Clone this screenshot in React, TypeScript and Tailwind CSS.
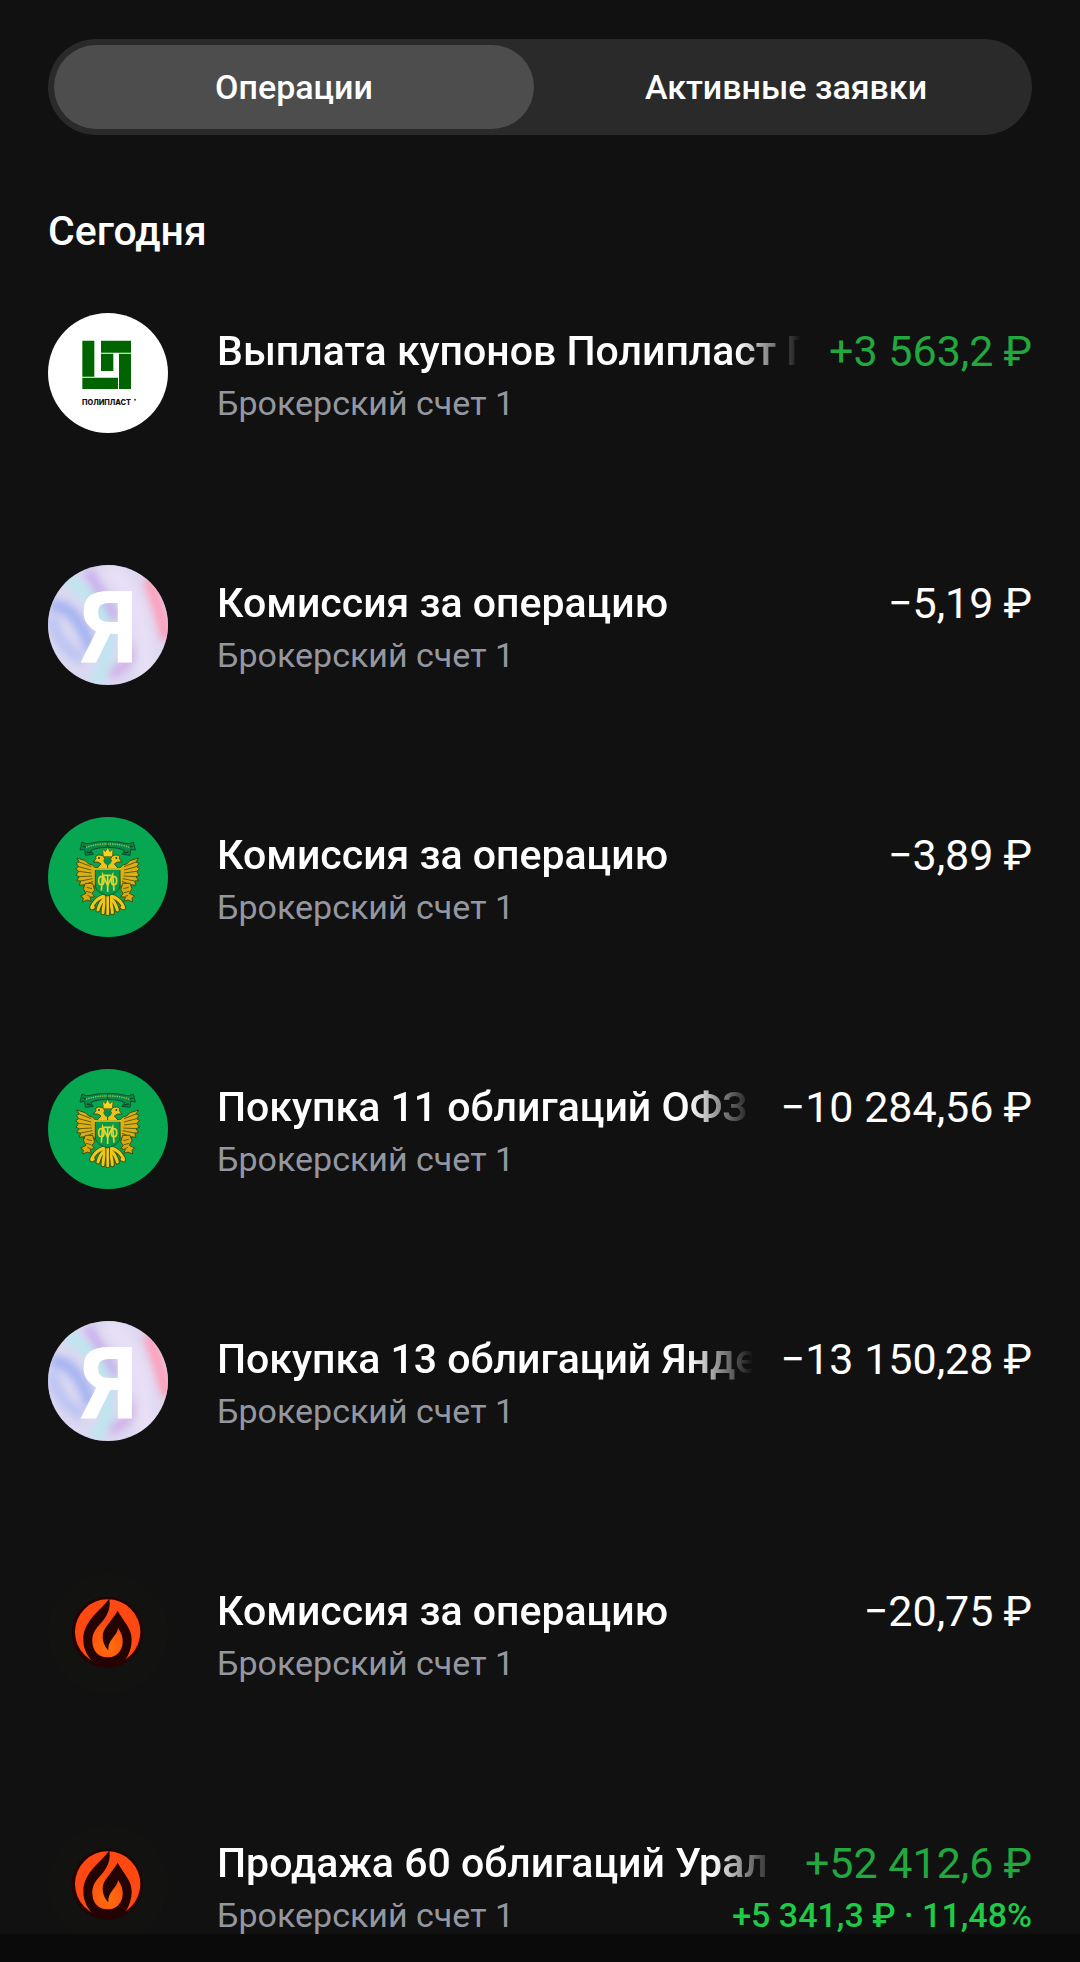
import { useState } from 'react';
import clsx from 'clsx';

type Issuer = 'polyplast' | 'yandex' | 'minfin' | 'ural';

interface Operation {
  id: number;
  issuer: Issuer;
  title: string;
  account: string;
  amount: string;
  income?: boolean;
  profit?: string;
}

const TABS = ['Операции', 'Активные заявки'];

const OPERATIONS: Operation[] = [
  {
    id: 1,
    issuer: 'polyplast',
    title: 'Выплата купонов Полипласт П',
    account: 'Брокерский счет 1',
    amount: '+3 563,2',
    income: true,
  },
  {
    id: 2,
    issuer: 'yandex',
    title: 'Комиссия за операцию',
    account: 'Брокерский счет 1',
    amount: '−5,19',
  },
  {
    id: 3,
    issuer: 'minfin',
    title: 'Комиссия за операцию',
    account: 'Брокерский счет 1',
    amount: '−3,89',
  },
  {
    id: 4,
    issuer: 'minfin',
    title: 'Покупка 11 облигаций ОФЗ',
    account: 'Брокерский счет 1',
    amount: '−10 284,56',
  },
  {
    id: 5,
    issuer: 'yandex',
    title: 'Покупка 13 облигаций Янде',
    account: 'Брокерский счет 1',
    amount: '−13 150,28',
  },
  {
    id: 6,
    issuer: 'ural',
    title: 'Комиссия за операцию',
    account: 'Брокерский счет 1',
    amount: '−20,75',
  },
  {
    id: 7,
    issuer: 'ural',
    title: 'Продажа 60 облигаций Урал',
    account: 'Брокерский счет 1',
    amount: '+52 412,6',
    income: true,
    profit: '+5 341,3 ₽ · 11,48%',
  },
];

const PolyplastLogo = () => (
  <svg viewBox="54 39 360 360" className="size-full bg-white">
    <g fill="#006400">
      <path d="M157 122h36v108h-36z" />
      <path d="M213 122h90v36h-90z" />
      <path d="M213 161h37v52h-37z" />
      <path d="M267 161h36v106h-36z" />
      <path d="M157 233h107v34H157z" />
    </g>
    <text
      x="156"
      y="314"
      fontSize="22"
      fontWeight="800"
      fill="#111"
      fontFamily="Inter, sans-serif"
    >
      ПОЛИПЛАСТ
    </text>
    <circle cx="315" cy="299" r="3" fill="#444" />
  </svg>
);

const YandexLogo = () => (
  <svg viewBox="54 45 360 360" className="size-full bg-[#dcd8f1]">
    <defs>
      <filter id="soft" x="-40%" y="-40%" width="180%" height="180%">
        <feGaussianBlur stdDeviation="13" />
      </filter>
    </defs>
    <g filter="url(#soft)" fill="none">
      <path d="M60 170C110 155 160 215 182 300" stroke="#a3b2f1" strokeWidth="36" />
      <path d="M64 200C74 250 100 300 160 330" stroke="#b9c3f3" strokeWidth="34" />
      <path d="M100 80C160 120 228 170 232 240S236 340 190 400" stroke="#bde6ef" strokeWidth="38" />
      <path d="M175 60C190 110 240 150 256 210" stroke="#c8a8ea" strokeWidth="26" />
      <path d="M316 270C312 320 290 350 240 375" stroke="#cfabe6" strokeWidth="26" />
      <path d="M230 55C310 110 345 200 350 400" stroke="#e6dff5" strokeWidth="60" />
      <path d="M355 85C380 150 395 200 412 270" stroke="#ff9db8" strokeWidth="36" />
    </g>
    <text
      x="316"
      y="335"
      textAnchor="end"
      fontSize="292"
      fontWeight="700"
      fill="#fff"
      fontFamily="'DejaVu Sans Mono', monospace"
    >
      Я
    </text>
  </svg>
);

/* left half of the eagle, mirrored for the right one */
const EagleHalf = () => (
  <g strokeLinejoin="round">
    <path
      d="M228 204L196 204Q190 192 176 192L166 182L140 174L148 186L139 190L146 200L137 206L146 214L138 226L148 230L140 242L152 243L148 256L164 254L160 262L178 262L196 258L198 208Z"
      fill="#dfae12"
      stroke="#3f5210"
      strokeWidth="3"
    />
    <path
      d="M148 186L184 200M146 200L184 210M146 214L184 219M148 230L186 228M152 243L188 236M164 254L190 244"
      stroke="#5c5f10"
      strokeWidth="3"
    />
    <path
      d="M190 186L198 176Q194 166 206 165Q220 164 224 176L233 196L233 206L200 206L213 192Q206 184 190 186Z"
      fill="#edc31b"
      stroke="#3f5210"
      strokeWidth="3"
    />
    <circle cx="207" cy="174" r="3" fill="#1d4a1a" />
    <path
      d="M166 250L188 250L194 270L186 280L194 290L180 292L184 304L172 300L158 306L160 294L152 288L168 280L160 266Z"
      fill="#dba90f"
      stroke="#3f5210"
      strokeWidth="3"
    />
    <path d="M170 262L186 266M168 274L184 278M172 286L182 290" stroke="#5c5f10" strokeWidth="3" />
    {/* tail feathers */}
    <g fill="none" stroke="#3f5210" strokeWidth="15" strokeLinecap="round">
      <path d="M222 288Q200 296 190 312T190 322" />
      <path d="M226 294Q210 306 204 330" />
      <path d="M230 294Q220 312 219 338" />
    </g>
    <g fill="none" stroke="#f0c81c" strokeWidth="9" strokeLinecap="round">
      <path d="M222 288Q200 296 190 312T190 322" />
      <path d="M226 294Q210 306 204 330" />
      <path d="M230 294Q220 312 219 338" />
    </g>
    <path
      d="M233 124Q200 124 182 130Q166 134 156 126L150 150L164 148L166 166L190 163L182 152Q200 142 233 142Z"
      fill="#0a8a48"
      stroke="#0b4a2b"
      strokeWidth="3"
    />
    <path d="M170 156l14 3M158 138l10 3" stroke="#0b4a2b" strokeWidth="4" />
    <path
      d="M168 142Q200 131 233 132"
      fill="none"
      stroke="#8fc95c"
      strokeWidth="4"
      strokeDasharray="4 3"
    />
  </g>
);

const MinfinLogo = () => (
  <svg viewBox="54 51 360 360" className="size-full bg-[#07a651]">
    <EagleHalf />
    <g transform="matrix(-1 0 0 1 466 0)">
      <EagleHalf />
    </g>
    <path
      d="M233 284V342"
      stroke="#3f5210"
      strokeWidth="14"
      strokeLinecap="round"
    />
    <path d="M233 284V342" stroke="#f0c81c" strokeWidth="8" strokeLinecap="round" />
    <path
      d="M218 146L226 155L233 142L240 155L249 146L247 170H220Z"
      fill="#fbd324"
      stroke="#4a5a10"
      strokeWidth="2"
    />
    <path d="M220 180Q233 168 246 180Q246 190 233 196Q220 190 220 180Z" fill="#0b8c45" />
    <path
      d="M196 208H270V258Q270 276 233 288Q196 276 196 258Z"
      fill="#089a4b"
      stroke="#16602a"
      strokeWidth="3"
    />
    <path d="M193 207H273" stroke="#f3ce25" strokeWidth="5" />
    <g fill="none" stroke="#e8d32a" strokeWidth="5">
      <path d="M214 272L218 224L233 256L248 224L252 272" />
      <path d="M222 226H244M233 226V276" />
      <ellipse cx="214" cy="242" rx="8" ry="12" />
      <ellipse cx="252" cy="242" rx="8" ry="12" />
    </g>
  </svg>
);

const UralLogo = () => (
  <svg viewBox="54 39 360 360" className="size-full bg-[#121210]">
    <defs>
      <radialGradient id="flame" gradientUnits="userSpaceOnUse" cx="235" cy="260" r="80">
        <stop offset="0" stopColor="#ff6f0c" />
        <stop offset="1" stopColor="#ff4812" />
      </radialGradient>
    </defs>
    <circle cx="232" cy="217" r="107" fill="#240303" />
    <circle cx="233" cy="216" r="98" fill="url(#flame)" />
    <path
      d="M237 116C215 150 160 180 160 238C160 266 170 285 186 303L196 315H272L283 303C298 285 305 262 305 238C305 205 283 188 263 152C242 188 218 203 218 230C218 246 226 262 235 271C232 240 262 228 264 204C274 218 279 232 278 248C276 275 258 292 232 292C205 292 188 272 187 245C186 205 215 195 230 165C238 150 241 135 238 116Z"
      fill="#240303"
    />
  </svg>
);

const LOGOS = {
  polyplast: PolyplastLogo,
  yandex: YandexLogo,
  minfin: MinfinLogo,
  ural: UralLogo,
};

const OperationRow = ({ operation }: { operation: Operation }) => {
  const Logo = LOGOS[operation.issuer];

  return (
    <li className="flex h-30 gap-[49px]">
      <div className="size-30 shrink-0 overflow-hidden rounded-full">
        <Logo />
      </div>
      <div className="flex min-w-0 flex-1 flex-col pt-3">
        <div className="flex gap-7 leading-[52px]">
          <h3 className="min-w-0 flex-1 overflow-hidden text-[41px] font-medium whitespace-nowrap mask-r-from-[calc(100%-64px)] mask-r-to-100%">
            {operation.title}
          </h3>
          <span
            className={clsx(
              'flex shrink-0 gap-2.5 text-[43px] whitespace-nowrap',
              operation.income && 'text-[#22a83e]',
            )}
          >
            {operation.amount}
            <span>₽</span>
          </span>
        </div>
        <div className="flex justify-between text-[34px] leading-[52px]">
          <span className="text-[#9497a0]">{operation.account}</span>
          {operation.profit && (
            <span className="font-medium text-[#1fcb46]">{operation.profit}</span>
          )}
        </div>
      </div>
    </li>
  );
};

export default function App() {
  const [activeTab, setActiveTab] = useState(TABS[0]);

  return (
    <main className="min-h-screen bg-[#111] px-12 pt-[39px] font-['Roboto','Noto_Sans',sans-serif] text-white">
      <div className="grid h-24 grid-cols-2 rounded-full bg-[#2a2a2a]">
        {TABS.map(tab => (
          <button
            key={tab}
            type="button"
            onClick={() => setActiveTab(tab)}
            className={clsx(
              'm-1.5 rounded-full text-[34px] font-medium',
              activeTab === tab && 'bg-[#4d4d4d]',
            )}
          >
            {tab}
          </button>
        ))}
      </div>

      <h2 className="mt-[70px] text-[41px] leading-[52px] font-medium">Сегодня</h2>

      <ul className="mt-14 flex flex-col gap-33">
        {OPERATIONS.map(operation => (
          <OperationRow key={operation.id} operation={operation} />
        ))}
      </ul>

      <div className="fixed inset-x-0 bottom-0 h-7 bg-[#0a0a0a]" />
    </main>
  );
}
